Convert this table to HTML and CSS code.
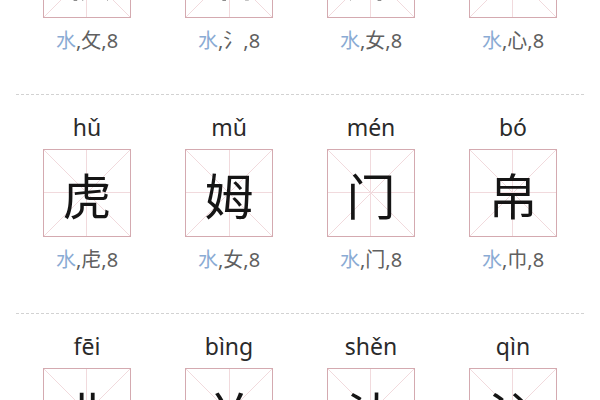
FILE: index.html
```html
<!DOCTYPE html>
<html lang="zh-CN">
<head>
    <meta charset="UTF-8">
    <meta name="viewport" content="width=device-width, initial-scale=1.0">
    <title>汉字五行</title>
    <link rel="stylesheet" href="styles.css">
</head>
<body>
    <div class="sheet">
        <div class="row">
            <div class="cell">
                <div class="pinyin">mù</div>
                <div class="box"><span>牧</span></div>
                <div class="info"><span class="wx">水</span>,攵,8</div>
            </div>
            <div class="cell">
                <div class="pinyin">bó</div>
                <div class="box"><span>泊</span></div>
                <div class="info"><span class="wx">水</span>,氵,8</div>
            </div>
            <div class="cell">
                <div class="pinyin">mèi</div>
                <div class="box"><span>妹</span></div>
                <div class="info"><span class="wx">水</span>,女,8</div>
            </div>
            <div class="cell">
                <div class="pinyin">niàn</div>
                <div class="box"><span>念</span></div>
                <div class="info"><span class="wx">水</span>,心,8</div>
            </div>
        </div>

        <div class="row">
            <div class="cell">
                <div class="pinyin">hǔ</div>
                <div class="box"><span>虎</span></div>
                <div class="info"><span class="wx">水</span>,虍,8</div>
            </div>
            <div class="cell">
                <div class="pinyin">mǔ</div>
                <div class="box"><span>姆</span></div>
                <div class="info"><span class="wx">水</span>,女,8</div>
            </div>
            <div class="cell">
                <div class="pinyin">mén</div>
                <div class="box"><span>门</span></div>
                <div class="info"><span class="wx">水</span>,门,8</div>
            </div>
            <div class="cell">
                <div class="pinyin">bó</div>
                <div class="box"><span>帛</span></div>
                <div class="info"><span class="wx">水</span>,巾,8</div>
            </div>
        </div>

        <div class="row">
            <div class="cell">
                <div class="pinyin">fēi</div>
                <div class="box"><span>非</span></div>
                <div class="info"><span class="wx">水</span>,非,8</div>
            </div>
            <div class="cell">
                <div class="pinyin">bìng</div>
                <div class="box"><span>并</span></div>
                <div class="info"><span class="wx">水</span>,干,8</div>
            </div>
            <div class="cell">
                <div class="pinyin">shěn</div>
                <div class="box"><span>沈</span></div>
                <div class="info"><span class="wx">水</span>,氵,8</div>
            </div>
            <div class="cell">
                <div class="pinyin">qìn</div>
                <div class="box"><span>沁</span></div>
                <div class="info"><span class="wx">水</span>,氵,8</div>
            </div>
        </div>
    </div>
</body>
</html>
```

FILE: styles.css
```css
body {
    margin: 0;
    padding: 0;
    background: #fff;
    font-family: "Noto Sans", "Noto Sans CJK SC", sans-serif;
    overflow: hidden;
}
.sheet {
    margin-top: -124px;
    padding: 0 16px;
}
.row {
    display: grid;
    grid-template-columns: repeat(4, 1fr);
    padding: 17px 0 40px;
    border-bottom: 1px dashed #d2d2d2;
}
.cell {
    display: flex;
    flex-direction: column;
    align-items: center;
}
.pinyin {
    height: 30px;
    line-height: 30px;
    font-size: 23px;
    color: #2a2a2a;
}
.box {
    width: 88px;
    height: 88px;
    box-sizing: border-box;
    margin-top: 7px;
    border: 1px solid #d4aab0;
    display: flex;
    align-items: center;
    justify-content: center;
    background:
        linear-gradient(to right, transparent calc(50% - 0.5px), #f1dadd calc(50% - 0.5px), #f1dadd calc(50% + 0.5px), transparent calc(50% + 0.5px)),
        linear-gradient(to bottom, transparent calc(50% - 0.5px), #f1dadd calc(50% - 0.5px), #f1dadd calc(50% + 0.5px), transparent calc(50% + 0.5px)),
        linear-gradient(to top right, transparent calc(50% - 0.7px), #f1dadd 50%, transparent calc(50% + 0.7px)),
        linear-gradient(to bottom right, transparent calc(50% - 0.7px), #f1dadd 50%, transparent calc(50% + 0.7px));
}
.box span {
    font-family: "Noto Sans CJK SC", sans-serif;
    font-size: 49px;
    line-height: 1;
    color: #151515;
}
.info {
    margin-top: 10px;
    height: 26px;
    line-height: 26px;
    font-size: 20px;
    color: #606060;
    font-family: "Noto Sans", "Noto Sans CJK SC", sans-serif;
}
.wx {
    color: #8aabd4;
}
```
